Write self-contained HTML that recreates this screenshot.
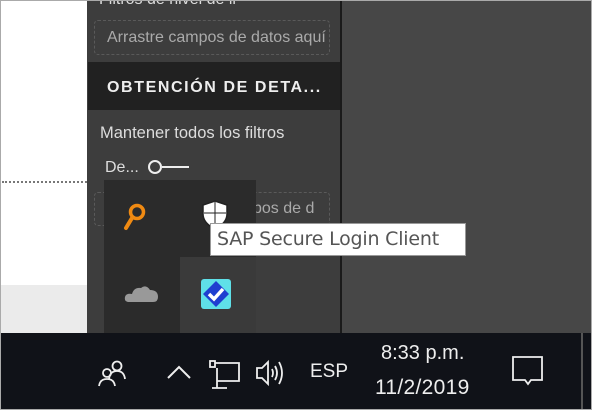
<!DOCTYPE html>
<html><head><meta charset="utf-8"><style>
*{margin:0;padding:0;box-sizing:border-box}
body{width:592px;height:410px;overflow:hidden;background:#fff;font-family:"Liberation Sans","DejaVu Sans",sans-serif;position:relative}
.a{position:absolute;white-space:nowrap}
</style></head><body>
<div class="a" style="left:0;top:0;width:592px;height:410px;border:1px solid #aaa;z-index:50;pointer-events:none"></div>
<div class="a" style="left:0;top:0;width:87px;height:285px;background:#fff"></div>
<div class="a" style="left:0;top:285px;width:87px;height:48px;background:#ebebeb"></div>
<div class="a" style="left:2px;top:181px;width:85px;border-top:2px dotted #777"></div>
<div class="a" style="left:87px;top:0;width:253px;height:333px;background:#3d3d3d"></div>
<div class="a" style="left:99px;top:-9px;color:#ddd;font-size:16px">Filtros de nivel de li</div>
<div class="a" style="left:94px;top:20px;width:236px;height:35px;border:1px dashed #5a5a5a;border-radius:4px;color:#aaa;font-size:16px;line-height:33px;padding-left:12px;overflow:hidden">Arrastre campos de datos aquí</div>
<div class="a" style="left:88px;top:62px;width:252px;height:48px;background:#212121"></div>
<div class="a" style="left:107px;top:79px;color:#eee;font-size:16px;font-weight:bold;letter-spacing:1.6px">OBTENCIÓN DE DETA...</div>
<div class="a" style="left:100px;top:124px;color:#ddd;font-size:16.5px">Mantener todos los filtros</div>
<div class="a" style="left:105px;top:159px;color:#ddd;font-size:16px">De...</div>
<div class="a" style="left:148px;top:160px;width:14px;height:14px;border:2px solid #eee;border-radius:50%"></div>
<div class="a" style="left:162px;top:166px;width:27px;height:2px;background:#eee"></div>
<div class="a" style="left:94px;top:192px;width:236px;height:34px;border:1px dashed #5a5a5a;border-radius:4px;color:#aaa;font-size:16px;line-height:32px;padding-left:158px;overflow:hidden">pos de d</div>
<div class="a" style="left:340px;top:0;width:2px;height:333px;background:#1a1a1a"></div>
<div class="a" style="left:342px;top:0;width:250px;height:333px;background:#474747"></div>
<div class="a" style="left:104px;top:180px;width:152px;height:153px;background:#2b2b2b"></div>
<div class="a" style="left:180px;top:257px;width:76px;height:76px;background:#3a3a3a"></div>
<svg class="a" style="left:122px;top:202px" width="26" height="30" viewBox="0 0 26 30"><circle cx="15" cy="10" r="6.5" fill="none" stroke="#f08a12" stroke-width="3.5"/><line x1="10" y1="16" x2="4" y2="26" stroke="#f08a12" stroke-width="4" stroke-linecap="round"/></svg>
<svg class="a" style="left:201px;top:200px" width="28" height="30" viewBox="0 0 28 30"><path d="M14 1 L26 5 L26 14 Q26 23 14 29 Q2 23 2 14 L2 5 Z" fill="#fff" stroke="#222" stroke-width="1.5"/><line x1="14" y1="2" x2="14" y2="28" stroke="#222"/><line x1="3" y1="13" x2="25" y2="13" stroke="#222"/></svg>
<svg class="a" style="left:124px;top:282px" width="36" height="22" viewBox="0 0 36 22"><path d="M5 20 Q0 20 1 15 Q2 11 8 12 Q10 5 17 6 Q22 2 26 8 Q34 8 34 15 Q34 20 29 20 Z" fill="#999"/></svg>
<svg class="a" style="left:200px;top:278px" width="32" height="32" viewBox="0 0 32 32"><rect x="1" y="1" width="30" height="30" rx="3" fill="#5fe0e8"/><path d="M16 3 L29 16 L16 29 L3 16 Z" fill="#1f3fd0"/><path d="M9 16 L14 21 L23 11" fill="none" stroke="#fff" stroke-width="3.5"/></svg>
<div class="a" style="left:210px;top:223px;width:256px;height:33px;background:#fff;border:1px solid #999;color:#555;line-height:31px;padding-left:6px;font-family:'DejaVu Sans',sans-serif;font-size:19px;letter-spacing:-0.2px;overflow:hidden">SAP Secure Login Client</div>
<div class="a" style="left:0;top:333px;width:582px;height:77px;background:#101218"></div>
<div class="a" style="left:581px;top:333px;width:2px;height:77px;background:#555"></div>
<div class="a" style="left:583px;top:333px;width:9px;height:77px;background:#101218"></div>
<svg class="a" style="left:96px;top:358px" width="32" height="30" viewBox="0 0 32 30" fill="none" stroke="#eee" stroke-width="1.8"><circle cx="21" cy="8" r="4.5"/><path d="M13 21 Q14 13 21 13 Q28 13 29 21"/><circle cx="11" cy="15" r="4"/><path d="M3 28 Q4 21 11 21 Q18 21 19 28"/></svg>
<svg class="a" style="left:166px;top:362px" width="26" height="18" viewBox="0 0 26 18"><path d="M2 16 L13 5 L24 16" fill="none" stroke="#eee" stroke-width="2"/></svg>
<svg class="a" style="left:209px;top:358px" width="34" height="34" viewBox="0 0 34 34" fill="none" stroke="#eee" stroke-width="1.8"><rect x="1" y="3" width="5" height="6"/><path d="M6 5 H30 V23 H8 M8 10 V30 M3 30 H18"/></svg>
<svg class="a" style="left:254px;top:357px" width="34" height="32" viewBox="0 0 34 32" fill="none" stroke="#eee" stroke-width="1.8"><path d="M3 11 H8 L14 5 V27 L8 21 H3 Z"/><path d="M18 12 Q20 16 18 20"/><path d="M21 9 Q25 16 21 23"/><path d="M25 5 Q31 16 25 27"/></svg>
<div class="a" style="left:310px;top:361px;color:#eee;font-size:19px">ESP</div>
<div class="a" style="left:381px;top:342px;color:#eee;font-size:20px">8:33 p.m.</div>
<div class="a" style="left:375px;top:376px;color:#eee;font-size:21px;letter-spacing:0.3px">11/2/2019</div>
<svg class="a" style="left:511px;top:355px" width="34" height="32" viewBox="0 0 34 32" fill="none" stroke="#eee" stroke-width="1.8"><path d="M2 2 H31 V25 H20 L17 29 L14 25 H2 Z"/></svg>
</body></html>
